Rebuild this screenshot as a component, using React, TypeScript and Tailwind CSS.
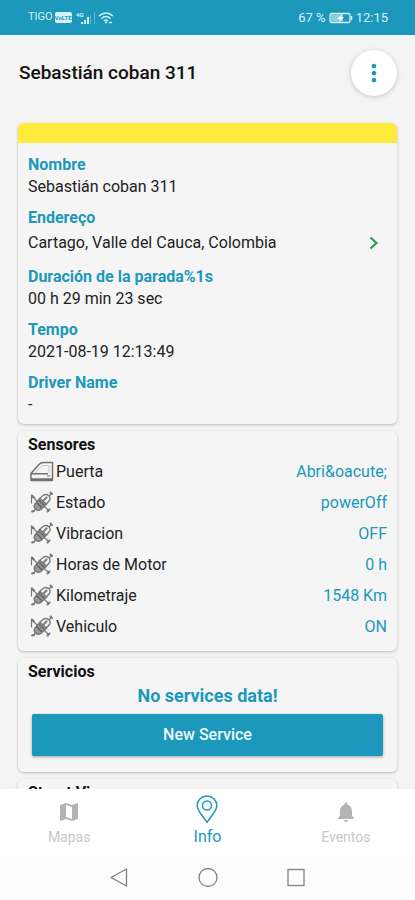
import { ReactNode } from 'react';
import { MdMap, MdMoreVert, MdNotifications } from 'react-icons/md';

type Detail = { label: string; value: string; link?: boolean };
type Sensor = { name: string; value: string; icon: 'door' | 'engine' };

const details: Detail[] = [
  { label: 'Nombre', value: 'Sebastián coban 311' },
  { label: 'Endereço', value: 'Cartago, Valle del Cauca, Colombia', link: true },
  { label: 'Duración de la parada%1s', value: '00 h 29 min 23 sec' },
  { label: 'Tempo', value: '2021-08-19 12:13:49' },
  { label: 'Driver Name', value: '-' },
];

const sensors: Sensor[] = [
  { name: 'Puerta', value: 'Abri&oacute;', icon: 'door' },
  { name: 'Estado', value: 'powerOff', icon: 'engine' },
  { name: 'Vibracion', value: 'OFF', icon: 'engine' },
  { name: 'Horas de Motor', value: '0 h', icon: 'engine' },
  { name: 'Kilometraje', value: '1548 Km', icon: 'engine' },
  { name: 'Vehiculo', value: 'ON', icon: 'engine' },
];

function DoorIcon() {
  return (
    <svg viewBox="0 0 24 22" className="h-[22px] w-6" fill="none" stroke="#707070" strokeWidth="1.5">
      <path d="M1 19.500V12.500L8 4.500Q10.500 1.500 13 1.500H22.500V19.500Z" strokeLinejoin="round" />
      <path d="M5 12 10.500 6Q12 4.500 14 4.500H19V12" strokeWidth="0.8" stroke="#bbb" />
      <path d="M1 12.800H18" />
      <path d="M1 18.500H22" strokeWidth="2.4" />
      <path d="M17 15H20" strokeWidth="1" />
    </svg>
  );
}

function EngineIcon() {
  return (
    <svg viewBox="0 0 24 24" className="h-6 w-6" fill="none" stroke="#777" strokeLinecap="round">
      <path d="M9 8 13 4.500Q16 2.500 18.500 4.500Q21.500 7 19 10L16 13.500" strokeWidth="1.3" />
      <path d="M5 13 10 7.500 16.500 13 11 18.500Q8 20.500 5.500 18Q3 15.500 5 13Z" fill="#999" strokeWidth="1.3" />
      <path d="M7 12 11.500 16.500M9.500 10 14 14" strokeWidth="1.5" stroke="#606060" />
      <path d="M11 12 16.500 6.500" strokeWidth="2.2" stroke="#808080" />
      <path d="M2 5 7.500 10.500M1.500 4V12M3 20.500 6 17.500M14.500 15.500 18.500 19.500M19.500 4.500 21.500 2.500" strokeWidth="1.2" />
      <path d="M2 4.500 4 6.500M2 20.500 4 20M17.500 20.500 19.500 18.500M20.500 1.500 22 3" strokeWidth="1.9" />
    </svg>
  );
}

function Card({ children }: { children: ReactNode }) {
  return (
    <section className="overflow-hidden rounded-md bg-[#f5f5f5] shadow-[0_1px_3px_rgba(0,0,0,0.24)]">
      {children}
    </section>
  );
}

function CardTitle({ children }: { children: ReactNode }) {
  return <h2 className="px-[10px] pt-[3px] text-base leading-[22px] font-bold text-[#111]">{children}</h2>;
}

function StatusBar() {
  return (
    <div className="flex h-[35px] shrink-0 items-center justify-between bg-[#1b98bb] pr-[27px] pl-7 text-[#d9f2f8]">
      <div className="flex items-center gap-[2px]">
        <span className="text-[11px]">TIGO</span>
        <span className="flex h-[11px] w-[17px] items-center justify-center rounded-xs bg-[#d9f2f8] text-[6px] font-bold text-[#1b98bb]">
          VoLTE
        </span>
        <svg viewBox="0 0 20 14" className="ml-[2px] h-[14px] w-5" fill="currentColor">
          <text x="0" y="6" fontSize="6" fontWeight="700">4G</text>
          <path d="M5 13V11H7V13ZM8 13V9H10V13ZM11 13V6H13V13Z" />
          <path d="M14 13V4H15V13ZM18 13V1H19V13Z" opacity=".35" />
        </svg>
        <svg viewBox="0 0 16 14" className="h-[14px] w-4" fill="none" stroke="currentColor" strokeWidth="1.5">
          <path d="M1 5Q8-1 15 5M3.500 7.500Q8 3.500 12.500 7.500M6 10Q8 8 10 10" />
          <path d="M7 11.500H9M11 11.500H14" />
        </svg>
      </div>
      <div className="flex items-center gap-[3px] text-[13px]">
        <span>67 %</span>
        <svg viewBox="0 0 24 12" className="h-3 w-6" fill="none" stroke="currentColor">
          <rect x="1" y="1.500" width="20" height="9" rx="1.500" strokeWidth="1.300" />
          <path d="M2 2.500H14V9.500H2Z" fill="currentColor" opacity=".6" stroke="none" />
          <path d="M13 2 8 7H11L10 10 15 5H12Z" fill="#fff" stroke="none" />
          <path d="M22.500 4V8" strokeWidth="1.500" />
        </svg>
        <span>12:15</span>
      </div>
    </div>
  );
}

function TabBar() {
  return (
    <nav className="grid h-[67px] shrink-0 grid-cols-3 bg-white">
      <button className="flex flex-col items-center pt-[11px] text-[#b3b3b3]">
        <MdMap className="h-6 w-6" />
        <span className="mt-[3px] text-sm leading-5 text-[#c8c8c8]">Mapas</span>
      </button>
      <button className="flex flex-col items-center pt-[6px] text-[#1b98bb]">
        <svg viewBox="0 0 22 29" className="h-[29px] w-[22px]" fill="none" stroke="currentColor" strokeWidth="1.5">
          <path d="M11 27.500C8 22 1.200 16.500 1.200 10.500A9.800 9.500 0 0 1 20.800 10.500C20.800 16.500 14 22 11 27.500Z" strokeLinejoin="round" />
          <circle cx="11" cy="10.500" r="4.500" />
        </svg>
        <span className="mt-[3px] text-base leading-5">Info</span>
      </button>
      <button className="flex flex-col items-center pt-[11px] text-[#b3b3b3]">
        <MdNotifications className="h-6 w-6" />
        <span className="mt-[3px] text-sm leading-5 text-[#c8c8c8]">Eventos</span>
      </button>
    </nav>
  );
}

function SystemNav() {
  return (
    <div className="flex h-11 shrink-0 items-center justify-center gap-[68px] bg-[#fcfcfc] text-[#808080]">
      <button aria-label="Atrás">
        <svg viewBox="0 0 20 20" className="h-5 w-5" fill="none" stroke="currentColor" strokeWidth="1.3">
          <path d="M16.500 1V18L1 9.500Z" strokeLinejoin="round" />
        </svg>
      </button>
      <button aria-label="Inicio">
        <svg viewBox="0 0 20 20" className="h-5 w-5" fill="none" stroke="currentColor" strokeWidth="1.3">
          <circle cx="10" cy="9.500" r="9" />
        </svg>
      </button>
      <button aria-label="Recientes">
        <svg viewBox="0 0 20 20" className="h-5 w-5" fill="none" stroke="currentColor" strokeWidth="1.3">
          <rect x="2" y="1.500" width="16" height="16" />
        </svg>
      </button>
    </div>
  );
}

export default function App() {
  return (
    <div className="flex h-screen flex-col bg-[#f4f4f4] font-['Roboto',sans-serif] text-[#222]">
      <StatusBar />

      <main className="min-h-0 flex-1 overflow-y-auto [scrollbar-width:none]">
        <header className="flex h-[88px] items-center justify-between pr-[18px] pb-[13px] pl-[19px]">
          <h1 className="text-[19px] leading-7 font-medium text-[#111]">Sebastián coban 311</h1>
          <button
            aria-label="Opciones"
            className="flex h-[46px] w-[46px] items-center justify-center rounded-full bg-white text-[#1b98bb] shadow-[0_1px_5px_rgba(0,0,0,0.2)]"
          >
            <MdMoreVert className="h-7 w-7" />
          </button>
        </header>

        <div className="flex flex-col gap-[7px] px-[18px] pb-4">
          <Card>
            <div className="h-5 bg-[#ffeb3b]" />
            <dl className="px-[10px] pt-[11px]">
              {details.map(({ label, value, link }) => (
                <div key={label} className="pb-[9px] text-base leading-[22px] last:pb-2">
                  <dt className="font-bold text-[#1b98bb]">{label}</dt>
                  {link ? (
                    <dd className="flex h-7 items-center justify-between pr-2">
                      {value}
                      <svg viewBox="0 0 10 14" className="h-[14px] w-[10px]" fill="none" stroke="#279a4b" strokeWidth="2.2">
                        <path d="M1.500 1.500 7.500 7 1.500 12.500" />
                      </svg>
                    </dd>
                  ) : (
                    <dd>{value}</dd>
                  )}
                </div>
              ))}
            </dl>
          </Card>

          <Card>
            <CardTitle>Sensores</CardTitle>
            <ul className="pr-[10px] pb-[9px] pl-3">
              {sensors.map(sensor => (
                <li key={sensor.name} className="flex h-[31px] items-center gap-[2px] text-base">
                  {sensor.icon === 'door' ? <DoorIcon /> : <EngineIcon />}
                  <span>{sensor.name}</span>
                  <span className="ml-auto text-[#1b98bb]">{sensor.value}</span>
                </li>
              ))}
            </ul>
          </Card>

          <Card>
            <CardTitle>Servicios</CardTitle>
            <div className="px-[14px] pb-4 text-center">
              <p className="mb-[5px] text-lg leading-[26px] font-bold text-[#1b98bb]">No services data!</p>
              <button className="h-[42px] w-full rounded-xs bg-[#1b98bb] text-base font-medium text-[#eefaff] shadow-[0_1px_3px_rgba(0,0,0,0.35)]">
                New Service
              </button>
            </div>
          </Card>

          <Card>
            <CardTitle>Street View</CardTitle>
            <div className="h-40" />
          </Card>
        </div>
      </main>

      <TabBar />
      <SystemNav />
    </div>
  );
}
